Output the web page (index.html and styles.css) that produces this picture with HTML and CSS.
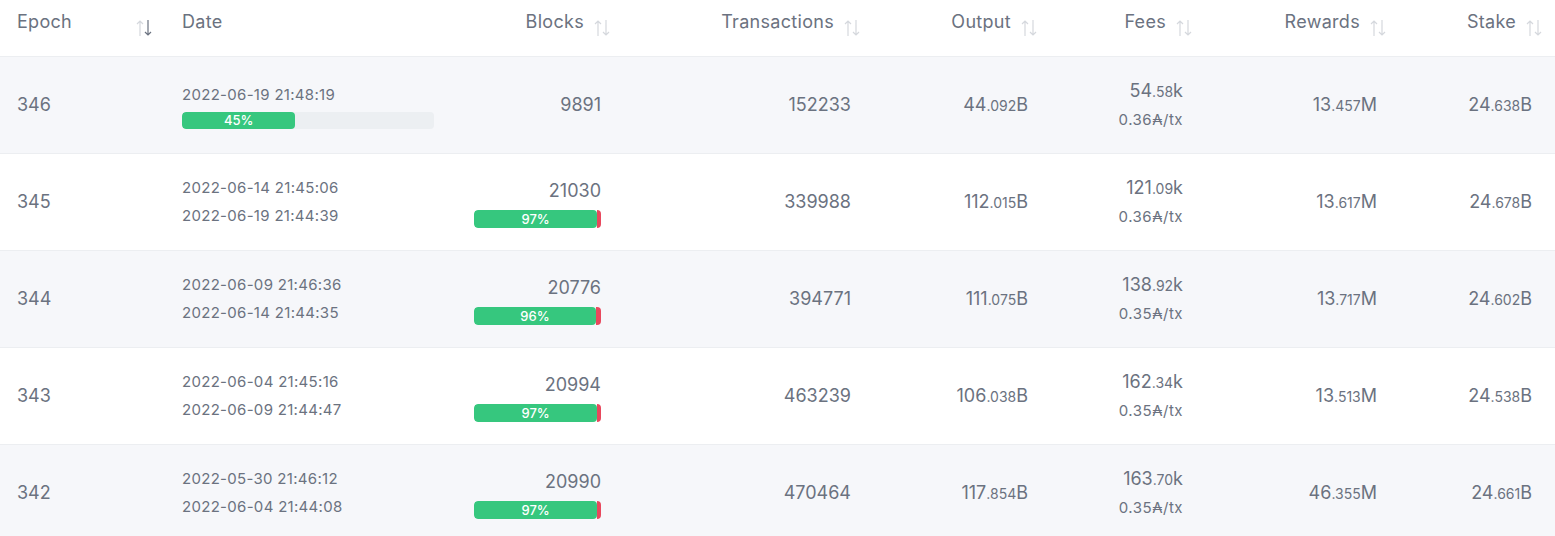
FILE: index.html
```html
<!DOCTYPE html>
<html lang="en">
  <head>
    <meta charset="UTF-8" />
    <meta name="viewport" content="width=device-width, initial-scale=1.0" />
    <title>Epochs</title>

    <link rel="stylesheet" href="styles.css">
  </head>
  <body>
    <table class="epochs">
      <colgroup>
        <col class="col-epoch" />
        <col class="col-date" />
        <col class="col-blocks" />
        <col class="col-tx" />
        <col class="col-output" />
        <col class="col-fees" />
        <col class="col-rewards" />
        <col class="col-stake" />
      </colgroup>
      <thead>
        <tr>
          <th class="left">
            <div class="th-inner spread">
              <span>Epoch</span>
              <svg class="sort active" width="16" height="18" viewBox="0 0 16 18"><path class="up" d="M4 17V2M1 5l3-3 3 3"/><path class="down" d="M12 1v15M9 13l3 3 3-3"/></svg>
            </div>
          </th>
          <th class="left"><div class="th-inner"><span>Date</span></div></th>
          <th>
            <div class="th-inner">
              <span>Blocks</span>
              <svg class="sort" width="16" height="18" viewBox="0 0 16 18"><path d="M4 17V2M1 5l3-3 3 3M12 1v15M9 13l3 3 3-3"/></svg>
            </div>
          </th>
          <th>
            <div class="th-inner">
              <span>Transactions</span>
              <svg class="sort" width="16" height="18" viewBox="0 0 16 18"><path d="M4 17V2M1 5l3-3 3 3M12 1v15M9 13l3 3 3-3"/></svg>
            </div>
          </th>
          <th>
            <div class="th-inner">
              <span>Output</span>
              <svg class="sort" width="16" height="18" viewBox="0 0 16 18"><path d="M4 17V2M1 5l3-3 3 3M12 1v15M9 13l3 3 3-3"/></svg>
            </div>
          </th>
          <th>
            <div class="th-inner">
              <span>Fees</span>
              <svg class="sort" width="16" height="18" viewBox="0 0 16 18"><path d="M4 17V2M1 5l3-3 3 3M12 1v15M9 13l3 3 3-3"/></svg>
            </div>
          </th>
          <th>
            <div class="th-inner">
              <span>Rewards</span>
              <svg class="sort" width="16" height="18" viewBox="0 0 16 18"><path d="M4 17V2M1 5l3-3 3 3M12 1v15M9 13l3 3 3-3"/></svg>
            </div>
          </th>
          <th class="last">
            <div class="th-inner">
              <span>Stake</span>
              <svg class="sort" width="16" height="18" viewBox="0 0 16 18"><path d="M4 17V2M1 5l3-3 3 3M12 1v15M9 13l3 3 3-3"/></svg>
            </div>
          </th>
        </tr>
      </thead>
      <tbody>
        <tr>
          <td class="left epoch">346</td>
          <td class="left">
            <div class="date">2022-06-19 21:48:19</div>
            <div class="epoch-bar"><div class="fill" style="width: 45%">45%</div></div>
          </td>
          <td>9891</td>
          <td>152233</td>
          <td>44<small>.092</small>B</td>
          <td>
            <div>54<small>.58</small>k</div>
            <div class="per-tx">0.36₳/tx</div>
          </td>
          <td>13<small>.457</small>M</td>
          <td class="last">24<small>.638</small>B</td>
        </tr>
        <tr>
          <td class="left epoch">345</td>
          <td class="left">
            <div class="date">2022-06-14 21:45:06</div>
            <div class="date">2022-06-19 21:44:39</div>
          </td>
          <td>
            <div>21030</div>
            <div class="blocks-bar"><div class="fill" style="width: 97%">97%</div><div class="miss"></div></div>
          </td>
          <td>339988</td>
          <td>112<small>.015</small>B</td>
          <td>
            <div>121<small>.09</small>k</div>
            <div class="per-tx">0.36₳/tx</div>
          </td>
          <td>13<small>.617</small>M</td>
          <td class="last">24<small>.678</small>B</td>
        </tr>
        <tr>
          <td class="left epoch">344</td>
          <td class="left">
            <div class="date">2022-06-09 21:46:36</div>
            <div class="date">2022-06-14 21:44:35</div>
          </td>
          <td>
            <div>20776</div>
            <div class="blocks-bar"><div class="fill" style="width: 96%">96%</div><div class="miss"></div></div>
          </td>
          <td>394771</td>
          <td>111<small>.075</small>B</td>
          <td>
            <div>138<small>.92</small>k</div>
            <div class="per-tx">0.35₳/tx</div>
          </td>
          <td>13<small>.717</small>M</td>
          <td class="last">24<small>.602</small>B</td>
        </tr>
        <tr>
          <td class="left epoch">343</td>
          <td class="left">
            <div class="date">2022-06-04 21:45:16</div>
            <div class="date">2022-06-09 21:44:47</div>
          </td>
          <td>
            <div>20994</div>
            <div class="blocks-bar"><div class="fill" style="width: 97%">97%</div><div class="miss"></div></div>
          </td>
          <td>463239</td>
          <td>106<small>.038</small>B</td>
          <td>
            <div>162<small>.34</small>k</div>
            <div class="per-tx">0.35₳/tx</div>
          </td>
          <td>13<small>.513</small>M</td>
          <td class="last">24<small>.538</small>B</td>
        </tr>
        <tr>
          <td class="left epoch">342</td>
          <td class="left">
            <div class="date">2022-05-30 21:46:12</div>
            <div class="date">2022-06-04 21:44:08</div>
          </td>
          <td>
            <div>20990</div>
            <div class="blocks-bar"><div class="fill" style="width: 97%">97%</div><div class="miss"></div></div>
          </td>
          <td>470464</td>
          <td>117<small>.854</small>B</td>
          <td>
            <div>163<small>.70</small>k</div>
            <div class="per-tx">0.35₳/tx</div>
          </td>
          <td>46<small>.355</small>M</td>
          <td class="last">24<small>.661</small>B</td>
        </tr>
      </tbody>
    </table>
  </body>
</html>
```

FILE: styles.css
```css
body {
  margin: 0;
  background-color: white;
  font-family: Inter, "Noto Sans", "DejaVu Sans", sans-serif;
  color: #6b7280;
}

.epochs {
  width: 1555px;
  border-collapse: collapse;
  table-layout: fixed;
}

.col-epoch { width: 165px; }
.col-date { width: 285px; }
.col-blocks { width: 168px; }
.col-tx { width: 250px; }
.col-output { width: 177px; }
.col-fees { width: 155px; }
.col-rewards { width: 194px; }
.col-stake { width: 161px; }

.epochs th {
  height: 56px;
  padding: 0 8px 0 17px;
  font-size: 18px;
  font-weight: 400;
  letter-spacing: 0.3px;
  color: #6b7280;
  text-align: right;
  vertical-align: top;
}

.epochs th.left {
  padding-right: 13px;
}

.epochs th.last {
  padding-right: 13px;
}

.th-inner {
  display: flex;
  justify-content: flex-end;
  align-items: flex-start;
  gap: 10px;
  padding-top: 11px;
}

.epochs th.left .th-inner {
  justify-content: flex-start;
}

.epochs th.left .th-inner.spread {
  justify-content: space-between;
}

.sort {
  margin-top: 8px;
  fill: none;
  stroke: #d5d8dd;
  stroke-width: 1.2;
}

.sort.active .down {
  stroke: #6b7280;
}

.epochs tbody tr {
  height: 97px;
  border-top: 1px solid #eceef1;
}

.epochs tbody tr:nth-child(odd) {
  background-color: #f6f7fa;
}

.epochs td {
  padding: 0 17px;
  font-size: 18px;
  text-align: right;
  vertical-align: middle;
  line-height: 28px;
}

.epochs td.left {
  text-align: left;
}

.epochs td.last {
  padding-right: 23px;
}

.epochs small {
  font-size: 14px;
}

.date {
  font-size: 15px;
  letter-spacing: 0.3px;
  line-height: 28px;
}

.per-tx {
  font-size: 15px;
  letter-spacing: 0.5px;
}

.epoch-bar {
  width: 252px;
  height: 17px;
  margin-top: 3px;
  border-radius: 4px;
  background-color: #eceff2;
  overflow: hidden;
}

.epoch-bar .fill,
.blocks-bar .fill {
  height: 100%;
  border-radius: 4px;
  background-color: #36c77e;
  color: white;
  font-size: 13px;
  font-weight: 500;
  line-height: 17px;
  text-align: center;
}

.blocks-bar {
  display: flex;
  width: 127px;
  height: 18px;
  margin: 5px 0 0 auto;
  border-radius: 4px;
  overflow: hidden;
}

.blocks-bar .fill {
  flex: none;
  line-height: 18px;
}

.blocks-bar .miss {
  flex: 1;
  background-color: #e8485d;
}
```
